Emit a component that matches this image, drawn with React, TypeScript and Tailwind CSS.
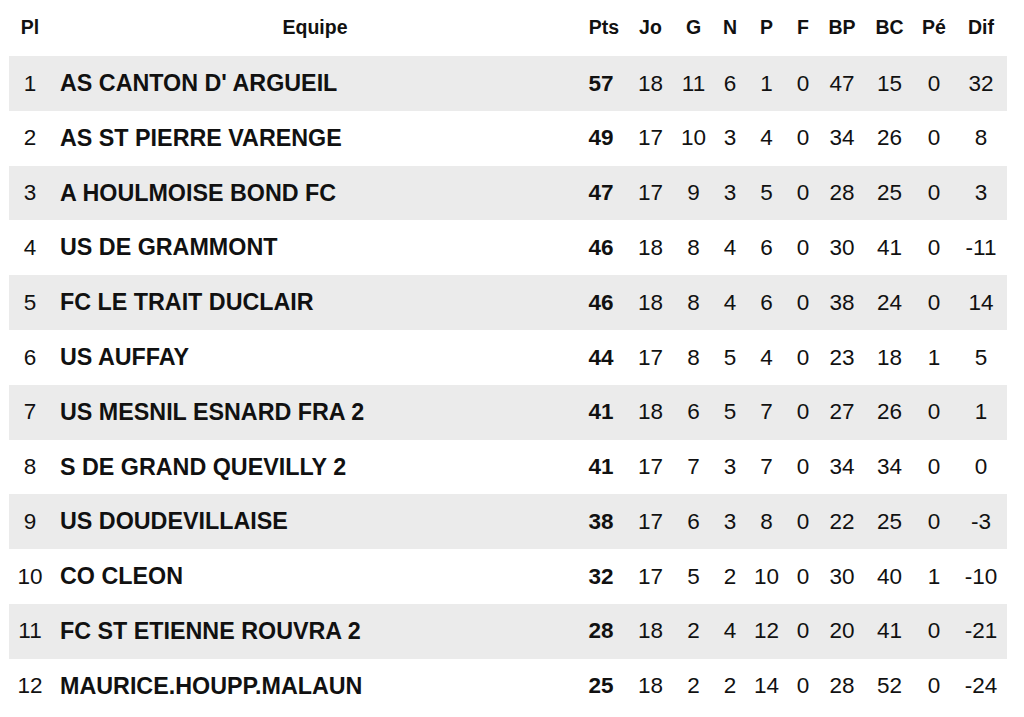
import React from "react";

type Row = [number, string, number, number, number, number, number, number, number, number, number, number];

const rows: Row[] = [
  [1, "AS CANTON D' ARGUEIL", 57, 18, 11, 6, 1, 0, 47, 15, 0, 32],
  [2, "AS ST PIERRE VARENGE", 49, 17, 10, 3, 4, 0, 34, 26, 0, 8],
  [3, "A HOULMOISE BOND FC", 47, 17, 9, 3, 5, 0, 28, 25, 0, 3],
  [4, "US DE GRAMMONT", 46, 18, 8, 4, 6, 0, 30, 41, 0, -11],
  [5, "FC LE TRAIT DUCLAIR", 46, 18, 8, 4, 6, 0, 38, 24, 0, 14],
  [6, "US AUFFAY", 44, 17, 8, 5, 4, 0, 23, 18, 1, 5],
  [7, "US MESNIL ESNARD FRA 2", 41, 18, 6, 5, 7, 0, 27, 26, 0, 1],
  [8, "S DE GRAND QUEVILLY 2", 41, 17, 7, 3, 7, 0, 34, 34, 0, 0],
  [9, "US DOUDEVILLAISE", 38, 17, 6, 3, 8, 0, 22, 25, 0, -3],
  [10, "CO CLEON", 32, 17, 5, 2, 10, 0, 30, 40, 1, -10],
  [11, "FC ST ETIENNE ROUVRA 2", 28, 18, 2, 4, 12, 0, 20, 41, 0, -21],
  [12, "MAURICE.HOUPP.MALAUN", 25, 18, 2, 2, 14, 0, 28, 52, 0, -24],
];

const cols = "grid w-[998px] grid-cols-[42px_528px_50px_43px_43px_30px_43px_30px_48px_47px_42px_52px]";
const headers = ["Pl", "Equipe", "Pts", "Jo", "G", "N", "P", "F", "BP", "BC", "Pé", "Dif"];

export default function App() {
  return (
    <div
      className="w-[1024px] h-[717px] bg-white text-[#111] overflow-hidden pl-[9px]"
      style={{ fontFamily: '"Liberation Sans", Arial, sans-serif' }}
    >
      <div className={`${cols} h-[56px] items-center text-[19.5px] font-bold`}>
        {headers.map((h) => (
          <div key={h} className="text-center">
            {h}
          </div>
        ))}
      </div>
      {rows.map((r, i) => (
        <div
          key={r[0]}
          className={`${cols} h-[54.8px] items-center text-[22.5px] ${i % 2 === 0 ? "bg-[#ebebeb]" : "bg-white"}`}
        >
          <div className="text-center">{r[0]}</div>
          <div className="pl-[9px] font-bold whitespace-nowrap text-[23.3px]">{r[1]}</div>
          <div className="text-center font-bold pr-[6px]">{r[2]}</div>
          {r.slice(3).map((v, j) => (
            <div key={j} className="text-center">
              {v}
            </div>
          ))}
        </div>
      ))}
    </div>
  );
}
